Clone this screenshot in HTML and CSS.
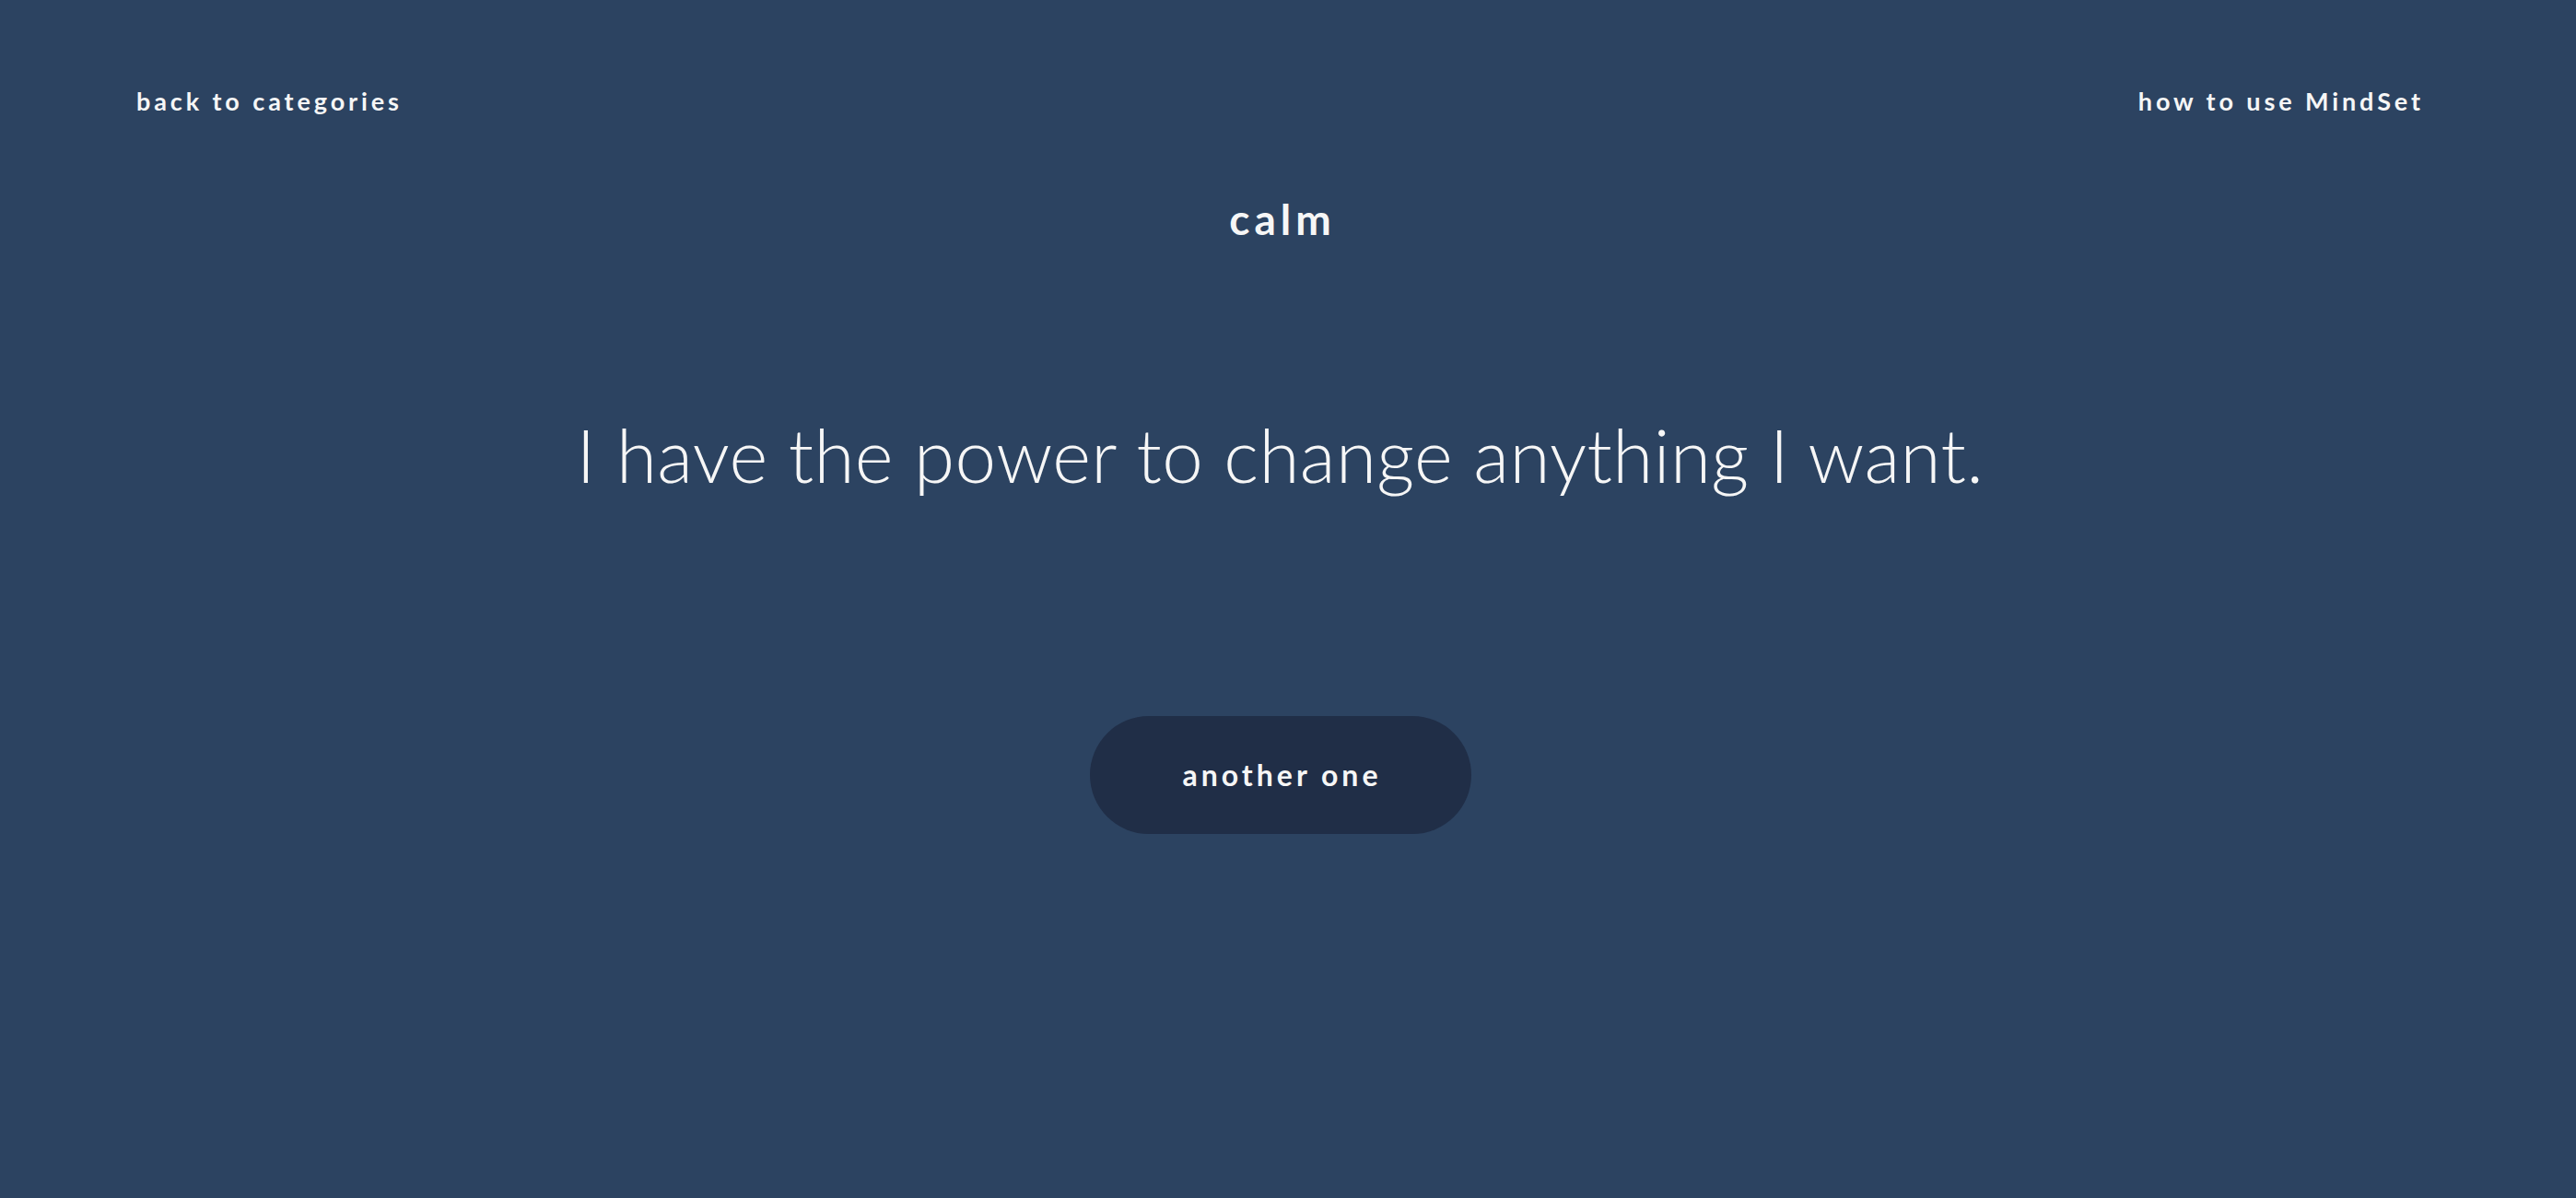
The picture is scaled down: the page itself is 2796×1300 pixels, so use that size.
FILE: index.html
```html
<!DOCTYPE html>
<html lang="en">
<head>
<meta charset="utf-8">
<title>MindSet - calm</title>
<link rel="stylesheet" href="styles.css">
</head>
<body>
<div class="page">
  <header class="topbar">
    <a class="navlink" href="#">back to categories</a>
    <a class="navlink" href="#">how to use MindSet</a>
  </header>
  <main class="content">
    <h1 class="category">calm</h1>
    <p class="quote">I have the power to change anything I want.</p>
    <button class="another" type="button">another one</button>
  </main>
</div>
</body>
</html>
```

FILE: styles.css
```css
html, body {
  margin: 0;
  padding: 0;
}
body {
  background: #2c4361;
  color: #f6f6f6;
  font-family: "Lato", "Noto Sans", sans-serif;
  min-height: 100vh;
}
.page {
  padding-right: 17px;
}
.topbar {
  display: flex;
  justify-content: space-between;
  padding: 96px 148px 0 148px;
}
.navlink {
  color: #f6f6f6;
  text-decoration: none;
  font-size: 27px;
  line-height: 1;
  font-weight: 700;
  letter-spacing: 3.9px;
}
.content {
  display: flex;
  flex-direction: column;
  align-items: center;
}
.category {
  margin: 92px 0 0 0;
  font-size: 46px;
  line-height: 1;
  font-weight: 700;
  letter-spacing: 5px;
  padding-left: 5px;
}
.quote {
  margin: 192px 0 0 0;
  font-size: 80px;
  line-height: 1;
  font-weight: 300;
  letter-spacing: 0.4px;
}
.another {
  margin-top: 244px;
  height: 128px;
  width: 414px;
  border: none;
  border-radius: 64px;
  background: #202e47;
  color: #f6f6f6;
  font-family: "Lato", "Noto Sans", sans-serif;
  font-size: 32px;
  line-height: 1;
  font-weight: 700;
  letter-spacing: 4px;
  padding: 0 0 0 4px;
  cursor: pointer;
}
```
